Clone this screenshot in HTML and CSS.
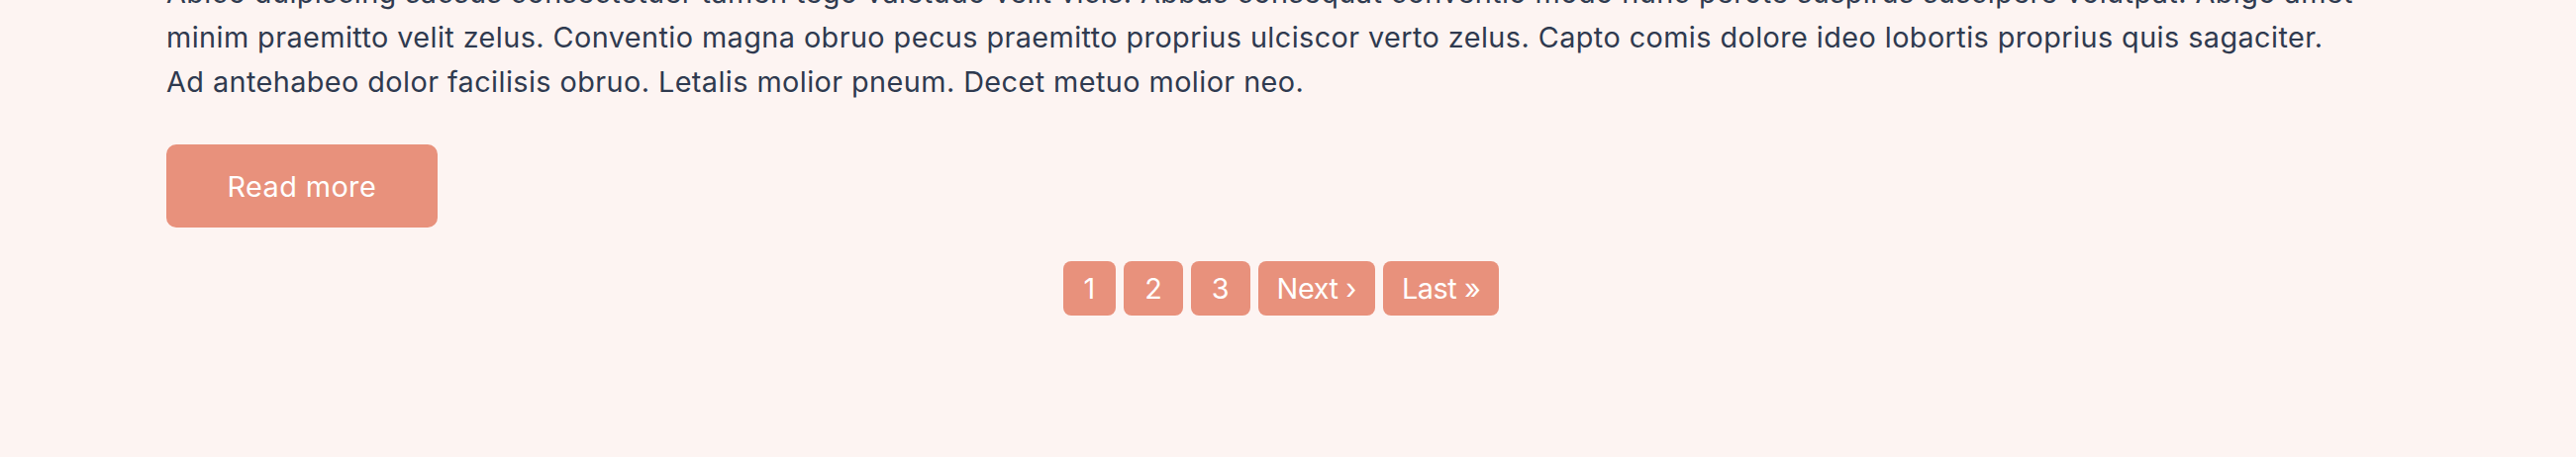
FILE: index.html
```html
<!DOCTYPE html>
<html lang="en">
<head>
<meta charset="utf-8">
<title>Post</title>
<link rel="stylesheet" href="styles.css">
</head>
<body>
<main class="page">
  <article class="post">
    <p class="post-text">Abico duipiscing sacsus consectetuer tamen tego valetudo velit vicis. Abbas consequat conventio modo nunc perote suspirus suscipere volutpat. Abigo amet<br>minim praemitto velit zelus. Conventio magna obruo pecus praemitto proprius ulciscor verto zelus. Capto comis dolore ideo lobortis proprius quis sagaciter.<br>Ad antehabeo dolor facilisis obruo. Letalis molior pneum. Decet metuo molior neo.</p>
    <a class="btn-read" href="#">Read more</a>
  </article>
  <nav class="pager" aria-label="Pagination">
    <a class="pager-item" href="#">1</a>
    <a class="pager-item" href="#">2</a>
    <a class="pager-item" href="#">3</a>
    <a class="pager-item pager-item--word" href="#">Next ›</a>
    <a class="pager-item pager-item--word" href="#">Last »</a>
  </nav>
</main>
</body>
</html>
```
FILE: styles.css
```css
html, body {
  margin: 0;
  padding: 0;
  background: #fdf4f2;
}
body {
  font-family: "Inter", "Open Sans", sans-serif;
  font-size: 28.8px;
  line-height: 45px;
  letter-spacing: 0.43px;
  color: #2f3a4f;
  height: 462px;
  overflow: hidden;
}
.page {
  padding: 0 182px 0 168px;
}
.post {
  display: flex;
  flex-direction: column;
  align-items: flex-start;
}
.post-text {
  margin: -30px 0 41px;
  white-space: nowrap;
}
.btn-read {
  display: inline-block;
  background: #e8917c;
  color: #fff;
  text-decoration: none;
  padding: 19.5px 61.5px;
  border-radius: 10px;
}
.pager {
  display: flex;
  justify-content: center;
  gap: 8px;
  margin-top: 34px;
}
.pager-item {
  display: inline-block;
  background: #e8917c;
  color: #fff;
  text-decoration: none;
  padding: 5px 21px;
  letter-spacing: 0;
  border-radius: 8px;
}
.pager-item--word {
  padding: 5px 19px;
  letter-spacing: -0.4px;
}
```
